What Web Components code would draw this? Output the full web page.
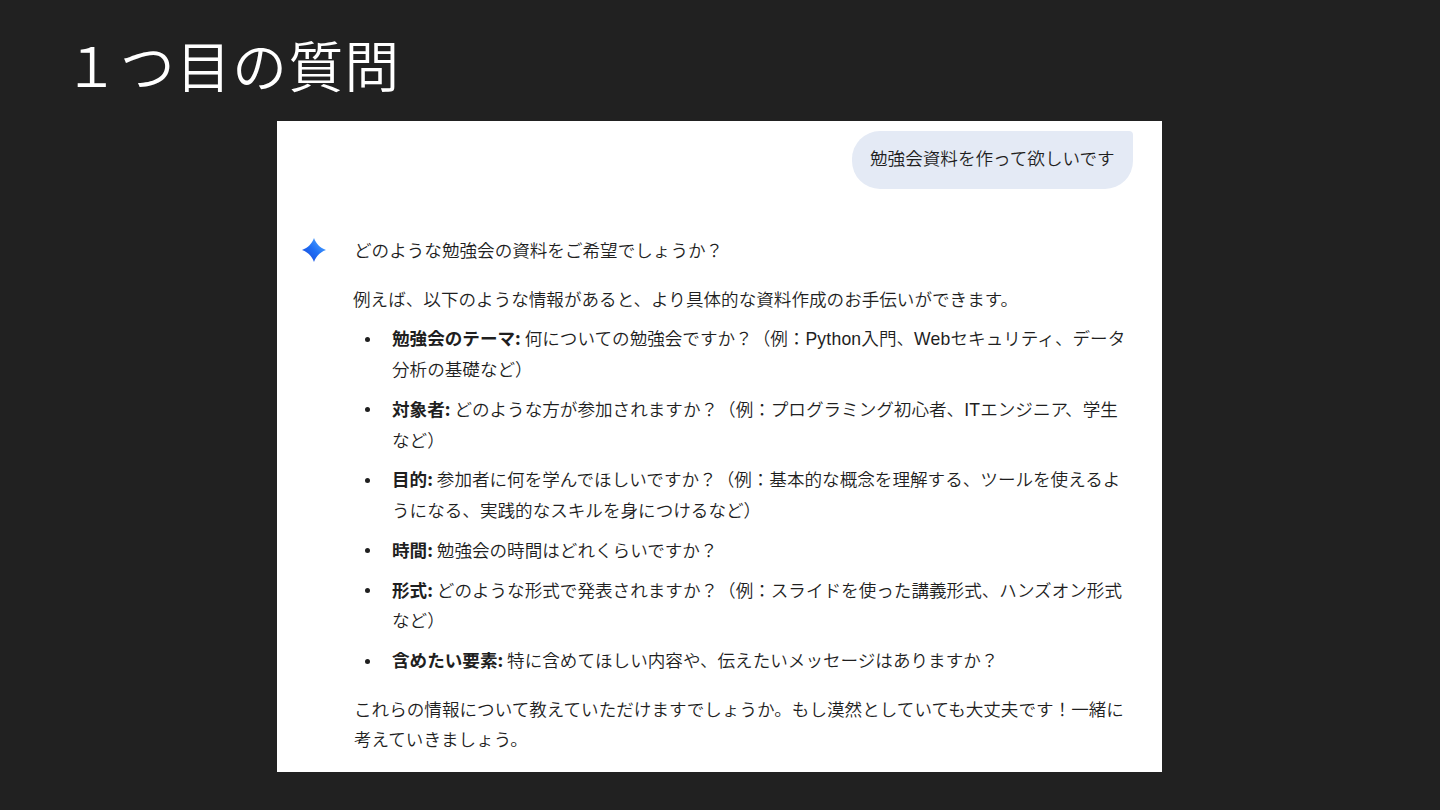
<!DOCTYPE html>
<html lang="ja">
<head>
<meta charset="utf-8">
<title>１つ目の質問</title>
<style>
  body {
    margin: 0;
    background: #212121;
    font-family: "Noto Sans CJK JP", sans-serif;
  }
</style>
</head>
<body>

<slide-page>
  <span slot="title">１つ目の質問</span>
  <chat-panel>
    <user-message>勉強会資料を作って欲しいです</user-message>
    <model-reply>
      <chat-text>どのような勉強会の資料をご希望でしょうか？</chat-text>
      <chat-text>例えば、以下のような情報があると、より具体的な資料作成のお手伝いができます。</chat-text>
      <topic-list>
        <topic-item label="勉強会のテーマ:">何についての勉強会ですか？（例：<span>Python</span>入門、<span>Web</span>セキュリティ、データ<br>分析の基礎など）</topic-item>
        <topic-item label="対象者:">どのような方が参加されますか？（例：プログラミング初心者、<span>IT</span>エンジニ<em>ア</em>、学生<br>など）</topic-item>
        <topic-item label="目的:">参加者に何を学んでほしいですか？（例：基本的な概念を理解する、ツールを使えるよ<br>うになる、実践的なスキルを身につけるなど）</topic-item>
        <topic-item label="時間:">勉強会の時間はどれくらいですか？</topic-item>
        <topic-item label="形式:">どのような形式で発表されますか？（例：スライドを使った講義形式、ハンズオン形式<br>など）</topic-item>
        <topic-item label="含めたい要素:">特に含めてほしい内容や、伝えたいメッセージはありますか？</topic-item>
      </topic-list>
      <chat-text>これらの情報について教えていただけますでしょうか。もし漠然としていても大丈夫です！一緒に<br>考えていきましょう。</chat-text>
    </model-reply>
  </chat-panel>
</slide-page>

<script>
/**
 * Attaches an open shadow root with the given markup.
 */
class BaseElement extends HTMLElement {

  constructor() {
    super();
    this.attachShadow({mode: 'open'}).innerHTML = this.constructor.markup;
  }

}

class SlidePage extends BaseElement {

  static markup = `
    <style>
      :host {
        display: flex;
        flex-direction: column;
        box-sizing: border-box;
        width: 1440px;
        height: 810px;
        overflow: hidden;
        background: #212121;
      }
      h1 {
        margin: 0;
        padding: 22px 0 0 64px;
        height: 99px;
        font-size: 54.6px;
        font-weight: 350;
        letter-spacing: 1.5px;
        line-height: 84px;
        color: #fff;
      }
    </style>
    <h1><slot name="title"></slot></h1>
    <slot></slot>
  `;

}

class ChatPanel extends BaseElement {

  static markup = `
    <style>
      :host {
        display: flex;
        flex-direction: column;
        box-sizing: border-box;
        width: 885px;
        height: 651px;
        margin-left: 277px;
        padding: 10px 29px 0 25px;
        background: #fff;
        color: #1f1f1f;
        font-size: 17.58px;
        font-weight: 350;
        line-height: 30.7px;
        white-space: nowrap;
      }
    </style>
    <slot></slot>
  `;

}

class UserMessage extends BaseElement {

  static markup = `
    <style>
      :host {
        display: block;
        box-sizing: border-box;
        align-self: flex-end;
        width: 281px;
        height: 58px;
        padding: 12px 18px;
        border-radius: 28px 4px 28px 28px;
        background: #e4eaf5;
      }
    </style>
    <slot></slot>
  `;

}

class ModelReply extends BaseElement {

  static markup = `
    <style>
      :host {
        display: grid;
        grid-template-columns: 24px 1fr;
        column-gap: 27px;
        margin-top: 46px;
      }
      svg {
        width: 24px;
        height: 24px;
        margin-top: 3px;
      }
      .body {
        display: flex;
        flex-direction: column;
        gap: 17.8px;
      }
    </style>
    <svg viewBox="0 0 24 24">
      <defs>
        <linearGradient id="spark" x1="0" y1="1" x2="1" y2="0">
          <stop offset="0.2" stop-color="#1b55e2"></stop>
          <stop offset="0.5" stop-color="#1f6ff5"></stop>
          <stop offset="0.85" stop-color="#4aa0ff"></stop>
        </linearGradient>
      </defs>
      <path fill="url(#spark)" d="M12 0C13.8 5.2 18 10 24 12C18 14 13.8 18.8 12 24C10.2 18.8 6 14 0 12C6 10 10.2 5.2 12 0Z"></path>
    </svg>
    <div class="body"><slot></slot></div>
  `;

}

class ChatText extends BaseElement {

  static markup = `
    <style>
      :host { display: block; }
      :host(:first-of-type),
      :host(:last-of-type) { padding-left: 1px; }
    </style>
    <slot></slot>
  `;

}

class TopicList extends BaseElement {

  static markup = `
    <style>
      :host {
        display: flex;
        flex-direction: column;
        gap: 9.1px;
        margin-top: -8.7px;
      }
    </style>
    <slot></slot>
  `;

}

class TopicItem extends BaseElement {

  static markup = `
    <style>
      :host {
        display: grid;
        grid-template-columns: 39px 1fr;
      }
      i {
        width: 5px;
        height: 5px;
        margin: 13.5px 0 0 11.5px;
        border-radius: 50%;
        background: #1f1f1f;
      }
      b { font-weight: 700; }
      ::slotted(span) {
        font-family: "Liberation Sans", Arial, sans-serif;
        letter-spacing: 0.2px;
        line-height: 1;
      }
      ::slotted(em) {
        font-style: normal;
        letter-spacing: -3px;
      }
    </style>
    <i></i>
    <div><b></b> <slot></slot></div>
  `;

  connectedCallback() {
    this.shadowRoot.querySelector('b').textContent = this.getAttribute('label');
  }

}

customElements.define('slide-page', SlidePage);
customElements.define('chat-panel', ChatPanel);
customElements.define('user-message', UserMessage);
customElements.define('model-reply', ModelReply);
customElements.define('chat-text', ChatText);
customElements.define('topic-list', TopicList);
customElements.define('topic-item', TopicItem);
</script>
</body>
</html>
